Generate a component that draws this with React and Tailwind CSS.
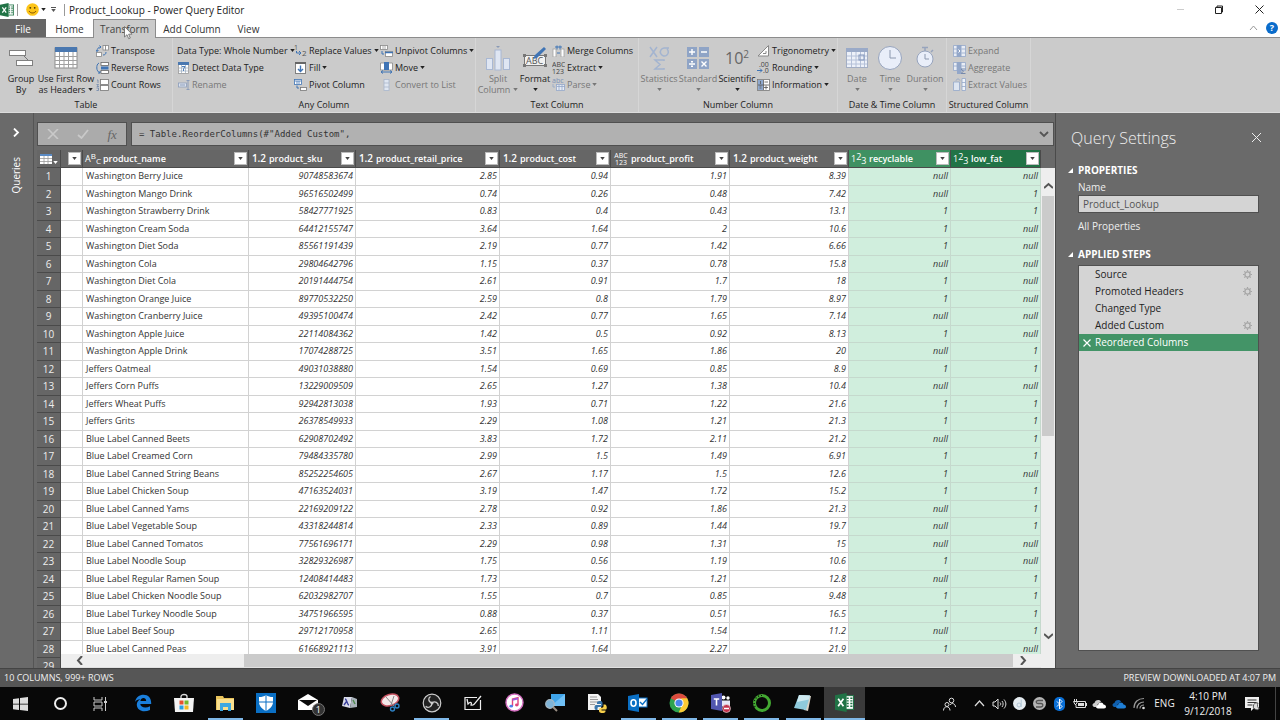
import React, { useState } from 'react'

const COLUMNS = [
  { key: 'name', label: 'product_name', type: 'text', width: 'w-[166px]' },
  { key: 'sku', label: 'product_sku', type: 'decimal', width: 'w-[107px]' },
  { key: 'retail', label: 'product_retail_price', type: 'decimal', width: 'w-[144px]' },
  { key: 'cost', label: 'product_cost', type: 'decimal', width: 'w-[111px]' },
  { key: 'profit', label: 'product_profit', type: 'any', width: 'w-[119px]' },
  { key: 'weight', label: 'product_weight', type: 'decimal', width: 'w-[119px]' },
  { key: 'recyclable', label: 'recyclable', type: 'whole', width: 'w-[102px]', head: 'bg-[#3f9162]' },
  { key: 'lowFat', label: 'low_fat', type: 'whole', width: 'w-[90px]', head: 'bg-[#217346]' },
]

const ROWS = [
  ['Washington Berry Juice', '90748583674', '2.85', '0.94', '1.91', '8.39', 'null', 'null'],
  ['Washington Mango Drink', '96516502499', '0.74', '0.26', '0.48', '7.42', 'null', '1'],
  ['Washington Strawberry Drink', '58427771925', '0.83', '0.4', '0.43', '13.1', '1', '1'],
  ['Washington Cream Soda', '64412155747', '3.64', '1.64', '2', '10.6', '1', 'null'],
  ['Washington Diet Soda', '85561191439', '2.19', '0.77', '1.42', '6.66', '1', 'null'],
  ['Washington Cola', '29804642796', '1.15', '0.37', '0.78', '15.8', 'null', 'null'],
  ['Washington Diet Cola', '20191444754', '2.61', '0.91', '1.7', '18', '1', 'null'],
  ['Washington Orange Juice', '89770532250', '2.59', '0.8', '1.79', '8.97', '1', 'null'],
  ['Washington Cranberry Juice', '49395100474', '2.42', '0.77', '1.65', '7.14', 'null', 'null'],
  ['Washington Apple Juice', '22114084362', '1.42', '0.5', '0.92', '8.13', '1', 'null'],
  ['Washington Apple Drink', '17074288725', '3.51', '1.65', '1.86', '20', 'null', '1'],
  ['Jeffers Oatmeal', '49031038880', '1.54', '0.69', '0.85', '8.9', '1', '1'],
  ['Jeffers Corn Puffs', '13229009509', '2.65', '1.27', '1.38', '10.4', 'null', 'null'],
  ['Jeffers Wheat Puffs', '92942813038', '1.93', '0.71', '1.22', '21.6', '1', '1'],
  ['Jeffers Grits', '26378549933', '2.29', '1.08', '1.21', '21.3', '1', '1'],
  ['Blue Label Canned Beets', '62908702492', '3.83', '1.72', '2.11', '21.2', 'null', '1'],
  ['Blue Label Creamed Corn', '79484335780', '2.99', '1.5', '1.49', '6.91', '1', '1'],
  ['Blue Label Canned String Beans', '85252254605', '2.67', '1.17', '1.5', '12.6', '1', 'null'],
  ['Blue Label Chicken Soup', '47163524031', '3.19', '1.47', '1.72', '15.2', '1', '1'],
  ['Blue Label Canned Yams', '22169209122', '2.78', '0.92', '1.86', '21.3', 'null', '1'],
  ['Blue Label Vegetable Soup', '43318244814', '2.33', '0.89', '1.44', '19.7', 'null', '1'],
  ['Blue Label Canned Tomatos', '77561696171', '2.29', '0.98', '1.31', '15', 'null', 'null'],
  ['Blue Label Noodle Soup', '32829326987', '1.75', '0.56', '1.19', '10.6', '1', 'null'],
  ['Blue Label Regular Ramen Soup', '12408414483', '1.73', '0.52', '1.21', '12.8', 'null', '1'],
  ['Blue Label Chicken Noodle Soup', '62032982707', '1.55', '0.7', '0.85', '9.48', '1', '1'],
  ['Blue Label Turkey Noodle Soup', '34751966595', '0.88', '0.37', '0.51', '16.5', '1', '1'],
  ['Blue Label Beef Soup', '29712170958', '2.65', '1.11', '1.54', '11.2', 'null', '1'],
  ['Blue Label Canned Peas', '61668921113', '3.91', '1.64', '2.27', '21.9', '1', 'null'],
  ['', '', '', '', '', '', '', ''],
]

const STEPS = [
  { name: 'Source', gear: true },
  { name: 'Promoted Headers', gear: true },
  { name: 'Changed Type', gear: false },
  { name: 'Added Custom', gear: true },
  { name: 'Reordered Columns', gear: false },
]

/* ---------- shared bits ---------- */

function Caret({ className = '' }) {
  return (
    <svg viewBox="0 0 6 4" className={`h-[3px] w-[5px] shrink-0 fill-current ${className}`} aria-hidden="true">
      <path d="M0 0h6L3 4z" />
    </svg>
  )
}

function Svg({ w, h, children, className = '' }) {
  return (
    <svg width={w} height={h} viewBox={`0 0 ${w} ${h}`} fill="none" className={`shrink-0 ${className}`} aria-hidden="true">
      {children}
    </svg>
  )
}

/* ---------- ribbon icons ---------- */

const BLUE = '#3f74b5'
const PALE = '#93a7c9'

const icons = {
  groupBy: (
    <Svg w={26} h={22}>
      <path d="M16 9l4 4" stroke="#777" />
      <rect x="1.5" y="3.5" width="16" height="5" fill="#fff" stroke="#808080" />
      <rect x="8.5" y="13.5" width="16" height="5" fill="#fff" stroke="#808080" />
    </Svg>
  ),
  firstRow: (
    <Svg w={24} h={22}>
      <rect x="1" y="1" width="22" height="20" fill="#fff" stroke="#8d8d8d" />
      <rect x="1" y="0" width="22" height="5" fill="#4a78b0" />
      <path d="M1 9.5h22M1 13.5h22M1 17.5h22M5.500 5v16M10 5v16M14.500 5v16M19 5v16" stroke="#a0a0a0" />
    </Svg>
  ),
  transpose: (
    <Svg w={13} h={12}>
      <path d="M1 6.500c0-3 1.500-4.500 4-4.500M3.500.5L5 2 3.500 3.500M0 5l1 1.500L2.500 5M7 10c2 0 3-1 3-3" stroke={BLUE} />
      <rect x="7" y=".5" width="2.500" height="4.500" fill="#fff" stroke="#888" strokeWidth=".8" />
      <rect x="9.500" y=".5" width="3" height="4.500" fill="#fff" stroke="#888" strokeWidth=".8" />
      <rect x=".5" y="7.500" width="5" height="4" fill="#fff" stroke="#888" strokeWidth=".8" />
    </Svg>
  ),
  reverse: (
    <Svg w={13} h={12}>
      <path d="M3 1C1 2 .8 4 .8 6S2 10 4 11M2 11h2V9" stroke={BLUE} />
      <rect x="5" y=".5" width="7.500" height="3" fill="#fff" stroke="#666" strokeWidth=".8" />
      <rect x="5" y="4.500" width="7.500" height="3" fill={BLUE} />
      <rect x="5" y="8.500" width="7.500" height="3" fill="#fff" stroke="#666" strokeWidth=".8" />
    </Svg>
  ),
  count: (
    <Svg w={13} h={12}>
      <path d="M1 1h1v3M.5 5.500h2L1 7.500h2M.5 9h2v2.500h-2" stroke="#6d86ab" strokeWidth=".8" />
      <rect x="4.500" y=".5" width="8" height="5" fill="#fff" stroke="#777" strokeWidth=".8" />
      <rect x="4.500" y="6.500" width="8" height="5" fill="#fff" stroke="#777" strokeWidth=".8" />
    </Svg>
  ),
  detect: (
    <Svg w={11} h={12}>
      <rect x=".5" y=".5" width="10" height="11" fill="#fff" stroke="#9a9a9a" strokeWidth=".8" />
      <rect x="0" y="0" width="11" height="3" fill="#4a78b0" />
      <path d="M1 6h9M1 9h9M3.500 3v8M7.500 3v8" stroke="#9ab" strokeWidth=".7" />
      <path d="M4 4.500h3L5.500 7v2" stroke={BLUE} strokeWidth=".9" />
    </Svg>
  ),
  rename: (
    <Svg w={12} h={10}>
      <rect x=".5" y="3" width="8" height="4" fill="#dbe2ee" stroke="#8c9dba" strokeWidth=".8" />
      <path d="M2 5h5M10 .5v9M8.500.5h3M8.500 9.500h3" stroke="#8c9dba" />
    </Svg>
  ),
  replace: (
    <svg width="13" height="13" viewBox="0 0 13 13" className="shrink-0" aria-hidden="true">
      <text x="0" y="6" fontSize="7" fill="#555" fontFamily="Open Sans, sans-serif">1</text>
      <text x="8" y="12" fontSize="8" fill="#555" fontFamily="Open Sans, sans-serif">2</text>
      <path d="M2.500 7v2h4M5 7l2 2-2 2" fill="none" stroke={BLUE} />
    </svg>
  ),
  fill: (
    <Svg w={11} h={12}>
      <rect x=".5" y=".5" width="10" height="11" fill="#fff" stroke="#808080" />
      <rect x="0" y="0" width="11" height="2" fill="#666" />
      <path d="M5.500 3.500v6M3 7l2.500 2.500L8 7" stroke={BLUE} strokeWidth="1.400" />
    </Svg>
  ),
  pivot: (
    <Svg w={13} h={12}>
      <rect x=".5" y=".5" width="7" height="5" fill="#fff" stroke={BLUE} strokeWidth=".8" />
      <path d="M1 2h6M3 2v3M5 2v3" stroke={BLUE} strokeWidth=".8" />
      <path d="M3 6.500V9h2" stroke={BLUE} />
      <rect x="6.500" y="8.500" width="6" height="3" fill="#fff" stroke="#777" strokeWidth=".8" />
    </Svg>
  ),
  unpivot: (
    <Svg w={13} h={12}>
      <rect x=".5" y=".5" width="7" height="4" fill="#fff" stroke="#888" strokeWidth=".8" />
      <path d="M3 1v4M5 1v4" stroke="#999" strokeWidth=".8" />
      <path d="M2 6v3h2" stroke={BLUE} />
      <rect x="5.500" y="6.500" width="7" height="5" fill="#fff" stroke="#888" strokeWidth=".8" />
      <path d="M5 7.500h8" stroke={BLUE} strokeWidth="1.500" />
    </Svg>
  ),
  move: (
    <Svg w={13} h={12}>
      <path d="M.5 1h12v7H.5z" fill="#fff" stroke="#888" strokeWidth=".8" />
      <rect x="4" y="0" width="5" height="8" fill={BLUE} />
      <path d="M1 10h11M3 8.500L1 10l2 1.500M10 8.500L12 10l-2 1.500" stroke={BLUE} />
    </Svg>
  ),
  list: (
    <Svg w={13} h={12}>
      <rect x="4" y=".5" width="5" height="11" fill="#dfe6f1" stroke="#a9b6cc" strokeWidth=".8" />
      <path d="M4 4h5M4 8h5" stroke="#a9b6cc" strokeWidth=".8" />
    </Svg>
  ),
  split: (
    <Svg w={26} h={26}>
      <path d="M11 1h4l-2 2z" fill="#8a9ab5" />
      <rect x="10" y="5" width="6" height="20" fill="#dfe6f3" stroke="#a9b8d3" />
      <rect x="1.500" y="13.500" width="6" height="11" fill="#dfe6f3" stroke="#a9b8d3" />
      <rect x="18.500" y="13.500" width="6" height="11" fill="#dfe6f3" stroke="#a9b8d3" />
    </Svg>
  ),
  format: (
    <svg width="26" height="24" viewBox="0 0 26 24" className="shrink-0" aria-hidden="true">
      <rect x="2.500" y="9.500" width="21" height="10" fill="#f1f1f1" stroke="#777" />
      <path d="M1 8h3v3H1zM22 8h3v3h-3zM1 18h3v3H1zM22 18h3v3h-3z" fill="#777" />
      <text x="4" y="18" fontSize="9" fill="#555" fontFamily="Open Sans, sans-serif">ABC</text>
      <path d="M22 1l2 2-9 9-4 1 2-4z" fill={BLUE} />
    </svg>
  ),
  merge: (
    <Svg w={13} h={12}>
      <rect x="1" y="4" width="3" height="8" fill="#fff" stroke="#a0a0a0" strokeWidth=".8" />
      <rect x="9" y="4" width="3" height="8" fill="#fff" stroke="#a0a0a0" strokeWidth=".8" />
      <path d="M3 2h7M5 .5v4M8 .5v4M5 8h3" stroke={BLUE} />
    </Svg>
  ),
  extract: (
    <svg width="13" height="14" viewBox="0 0 13 14" className="shrink-0" aria-hidden="true">
      <text x="0" y="6" fontSize="7" fill="#444" fontFamily="Open Sans, sans-serif">ABC</text>
      <text x="0" y="13" fontSize="7" fill="#444" fontFamily="Open Sans, sans-serif">123</text>
    </svg>
  ),
  parse: (
    <svg width="13" height="13" viewBox="0 0 13 13" className="shrink-0" aria-hidden="true">
      <text x="0" y="5" fontSize="7" fill="#7d93b8" fontFamily="Open Sans, sans-serif">abc</text>
      <rect x="4.500" y="6.500" width="8" height="6" fill="#e6ebf4" stroke={PALE} strokeWidth=".8" />
      <path d="M1 6v3h2M5 8.500h8M7 7v5M10 7v5" fill="none" stroke={PALE} strokeWidth=".8" />
    </svg>
  ),
  statistics: (
    <Svg w={24} h={26}>
      <path d="M3 2l7 10M10 2L3 12M22 3h-5a4 4 0 1 0 3 1" stroke="#a3b4d0" strokeWidth="1.500" />
      <path d="M17 16V15H8l5 4.500L8 24h9v-1" stroke="#a3b4d0" strokeWidth="1.500" />
    </Svg>
  ),
  standard: (
    <Svg w={24} h={24}>
      <path d="M1 1h10v10H1zM13 1h10v10H13zM1 13h10v10H1zM13 13h10v10H13z" fill="#8fa4c6" />
      <path d="M6 3v6M3 6h6M15 6h6M3 18h6M15.500 15.500l5 5M20.500 15.500l-5 5" stroke="#fff" strokeWidth="1.400" />
      <path d="M5 15h2v1.500H5zM5 19.500h2V21H5z" fill="#fff" />
    </Svg>
  ),
  trig: (
    <Svg w={13} h={12}>
      <path d="M1 11L11.500.5V11z" fill="#fff" stroke="#888" />
      <path d="M9 6v2.500H6" stroke="#888" />
    </Svg>
  ),
  rounding: (
    <svg width="13" height="13" viewBox="0 0 13 13" className="shrink-0" aria-hidden="true">
      <text x="2" y="6" fontSize="7" fill="#444" fontFamily="Open Sans, sans-serif">.00</text>
      <text x="6" y="12" fontSize="7" fill="#444" fontFamily="Open Sans, sans-serif">.0</text>
      <path d="M0 9.500h5M3 7.500l2 2-2 2" fill="none" stroke={BLUE} />
    </svg>
  ),
  information: (
    <Svg w={13} h={12}>
      <rect x=".5" y=".5" width="12" height="11" fill="#fff" stroke="#777" strokeWidth=".8" />
      <rect x="1" y="1" width="5" height="10" fill="#8fa9cf" />
      <path d="M3.500 2v3M2.500 7h2M2.500 9h2M7.500 3h3.500M9 6.500v4M7 8.500h4M6.500 1v10M1 6h11" stroke="#555" strokeWidth=".8" />
    </Svg>
  ),
  date: (
    <Svg w={24} h={22}>
      <rect x="1.500" y="1.500" width="21" height="19" fill="#edf1f9" stroke="#a3aec4" />
      <rect x="1" y="1" width="22" height="4" fill="#9aaac8" />
      <path d="M2 9h20M2 13h20M2 17h20M6.500 5v15M11 5v15M15.500 5v15M19.500 5v15" stroke="#b4c0d8" />
      <rect x="14" y="8" width="5" height="5" stroke="#8296bb" />
    </Svg>
  ),
  time: (
    <Svg w={26} h={26}>
      <circle cx="13" cy="13" r="11.500" fill="#e9eef9" stroke="#97a4bd" />
      <path d="M13 5v8h6" stroke="#8c98ae" />
    </Svg>
  ),
  duration: (
    <Svg w={24} h={24}>
      <path d="M9 1.500h6M12 1.500V5M18 6l2-2" stroke="#97a4bd" strokeWidth="1.500" />
      <circle cx="12" cy="13" r="8" fill="#e9eef9" stroke="#97a4bd" />
      <path d="M12 8v5h4" stroke="#8c98ae" />
    </Svg>
  ),
  expand: (
    <Svg w={13} h={12}>
      <path d="M.5.5h12v11H.5zM4 .5v11M.5 4H4M.5 8H4M8.500 4h4M8.500 8h4" fill="#e9edf5" stroke={PALE} strokeWidth=".8" />
      <path d="M4 0h4.500v12H4z" fill={PALE} />
      <path d="M5.500 4.500L7 6 5.500 7.500" stroke="#fff" />
    </Svg>
  ),
  aggregate: (
    <Svg w={13} h={12}>
      <path d="M.5.5h12v8H.5zM4 .5v8M.5 4H4M8.500 4h4" fill="#e9edf5" stroke={PALE} strokeWidth=".8" />
      <path d="M4 0h4.500v12H4z" fill={PALE} />
      <path d="M12.500 7H8l2.500 2.200L8 11.500h4.500" stroke="#7588aa" />
    </Svg>
  ),
  extractValues: (
    <Svg w={13} h={13}>
      <path d="M.5 4h6v8.500h-6z" fill="#dde5f1" stroke={PALE} strokeWidth=".8" />
      <path d="M9 .5h3.500v12H9zM9 4.500h3.500M9 8.500h3.500" fill="#eef2f9" stroke={PALE} strokeWidth=".8" />
      <path d="M3 2.500C4 .5 6 .5 7 2.500" stroke={PALE} />
    </Svg>
  ),
}

/* ---------- ribbon ---------- */

function SmallButton({ icon, label, caret, disabled }) {
  return (
    <button
      disabled={disabled}
      className={`flex h-[17px] items-center gap-[2px] whitespace-nowrap text-[9px] leading-[17px] ${disabled ? 'text-[#777]' : 'text-[#222]'}`}
    >
      {icon && <span className="flex w-[13px] shrink-0 justify-center">{icon}</span>}
      <span>{label}</span>
      {caret && <Caret />}
    </button>
  )
}

function LargeButton({ icon, lines, caret = 'below', disabled, width }) {
  return (
    <button
      disabled={disabled}
      className={`flex shrink-0 flex-col items-center whitespace-nowrap text-[9px] leading-[11px] ${width} ${disabled ? 'text-[#777]' : 'text-[#222]'}`}
    >
      <span className="flex h-[31px] items-center justify-center">{icon}</span>
      <span>{lines[0]}</span>
      <span className="flex h-[11px] items-center gap-[3px]">
        {lines[1]}
        {caret !== 'none' && <Caret />}
      </span>
    </button>
  )
}

function RibbonGroup({ title, width, children }) {
  return (
    <section className={`flex shrink-0 flex-col border-r border-[#d6d6d6] ${width}`} aria-label={title}>
      <div className="flex h-[60px] pt-1">{children}</div>
      <div className="h-[14px] text-center text-[9px] leading-[14px] whitespace-nowrap text-[#222]">{title}</div>
    </section>
  )
}

function Stack({ width = '', children }) {
  return <div className={`flex shrink-0 flex-col items-start ${width}`}>{children}</div>
}

function Ribbon() {
  return (
    <div className="flex h-[75px] shrink-0 overflow-hidden border-b border-[#dcdcdc] bg-[#cbcbcb]">
      <RibbonGroup title="Table" width="w-[173px]">
        <LargeButton icon={icons.groupBy} lines={['Group', 'By']} caret="none" width="ml-1 w-[34px]" />
        <LargeButton icon={icons.firstRow} lines={['Use First Row', 'as Headers']} width="w-14 mr-[2px]" />
        <Stack>
          <SmallButton icon={icons.transpose} label="Transpose" />
          <SmallButton icon={icons.reverse} label="Reverse Rows" />
          <SmallButton icon={icons.count} label="Count Rows" />
        </Stack>
      </RibbonGroup>
      <RibbonGroup title="Any Column" width="w-[303px]">
        <Stack width="ml-1 w-[117px]">
          <SmallButton label="Data Type: Whole Number" caret />
          <SmallButton icon={icons.detect} label="Detect Data Type" />
          <SmallButton icon={icons.rename} label="Rename" disabled />
        </Stack>
        <Stack width="w-[86px]">
          <SmallButton icon={icons.replace} label="Replace Values" caret />
          <SmallButton icon={icons.fill} label="Fill" caret />
          <SmallButton icon={icons.pivot} label="Pivot Column" />
        </Stack>
        <Stack>
          <SmallButton icon={icons.unpivot} label="Unpivot Columns" caret />
          <SmallButton icon={icons.move} label="Move" caret />
          <SmallButton icon={icons.list} label="Convert to List" disabled />
        </Stack>
      </RibbonGroup>
      <RibbonGroup title="Text Column" width="w-[163px]">
        <LargeButton icon={icons.split} lines={['Split', 'Column']} disabled width="ml-[2px] w-10" />
        <LargeButton icon={icons.format} lines={['Format', '']} width="w-[34px]" />
        <Stack>
          <SmallButton icon={icons.merge} label="Merge Columns" />
          <SmallButton icon={icons.extract} label="Extract" caret />
          <SmallButton icon={icons.parse} label="Parse" caret disabled />
        </Stack>
      </RibbonGroup>
      <RibbonGroup title="Number Column" width="w-[199px]">
        <LargeButton icon={icons.statistics} lines={['Statistics', '']} disabled width="w-10" />
        <LargeButton icon={icons.standard} lines={['Standard', '']} disabled width="w-[38px]" />
        <LargeButton
          icon={
            <span className="flex items-start text-[16px] leading-5 text-[#666]">
              10<span className="text-[10px] leading-3">2</span>
            </span>
          }
          lines={['Scientific', '']}
          width="w-10"
        />
        <Stack>
          <SmallButton icon={icons.trig} label="Trigonometry" caret />
          <SmallButton icon={icons.rounding} label="Rounding" caret />
          <SmallButton icon={icons.information} label="Information" caret />
        </Stack>
      </RibbonGroup>
      <RibbonGroup title="Date & Time Column" width="w-[109px]">
        <LargeButton icon={icons.date} lines={['Date', '']} disabled width="ml-[2px] w-[34px]" />
        <LargeButton icon={icons.time} lines={['Time', '']} disabled width="w-8" />
        <LargeButton icon={icons.duration} lines={['Duration', '']} disabled width="w-[38px]" />
      </RibbonGroup>
      <RibbonGroup title="Structured Column" width="w-[84px]">
        <Stack width="ml-[6px]">
          <SmallButton icon={icons.expand} label="Expand" disabled />
          <SmallButton icon={icons.aggregate} label="Aggregate" disabled />
          <SmallButton icon={icons.extractValues} label="Extract Values" disabled />
        </Stack>
      </RibbonGroup>
    </div>
  )
}

function ExcelLogo({ size = 16 }) {
  return (
    <svg width={size} height={size} viewBox="0 0 18 18" aria-hidden="true" className="shrink-0">
      <rect x="9" y="2.500" width="8.500" height="13" fill="#fff" stroke="#217346" />
      <path d="M11 5h2M11 7.500h2M11 10h2M11 12.500h2M14.500 5h2M14.500 7.500h2M14.500 10h2M14.500 12.500h2" stroke="#217346" strokeWidth="1.300" />
      <path d="M0 2.200L11 0v18L0 15.800z" fill="#217346" />
      <path d="M3 5.500l5 7M8 5.500l-5 7" stroke="#fff" strokeWidth="1.600" />
    </svg>
  )
}

function TitleBar() {
  return (
    <header className="flex h-[19px] shrink-0 items-center bg-white">
      <ExcelLogo size={14} />
      <span className="ml-[3px] h-3 w-px bg-[#999]" />
      <button className="ml-2 flex items-center gap-[2px] text-[#222]" aria-label="Send a smile">
        <svg width="13" height="13" viewBox="0 0 13 13" aria-hidden="true">
          <circle cx="6.500" cy="6.500" r="6.300" fill="#fcc419" />
          <circle cx="4.300" cy="4.800" r=".9" fill="#4a3500" />
          <circle cx="8.700" cy="4.800" r=".9" fill="#4a3500" />
          <path d="M3 8c1.500 2.600 5.500 2.600 7 0" fill="none" stroke="#7a4b00" />
        </svg>
        <Caret />
      </button>
      <button className="ml-[5px] flex flex-col items-center gap-px text-[#555]" aria-label="Customize quick access toolbar">
        <span className="h-px w-[5px] bg-current" />
        <Caret />
      </button>
      <span className="ml-2 h-3 w-px bg-[#999]" />
      <h1 className="ml-1 text-[10px] leading-none whitespace-nowrap text-[#222]">Product_Lookup - Power Query Editor</h1>
      <div className="ml-auto flex items-center">
        <button aria-label="Minimize" className="flex w-10 justify-center">
          <span className="h-px w-[7px] bg-[#ccc]" />
        </button>
        <button aria-label="Restore" className="flex w-[38px] justify-center">
          <Svg w={10} h={10}>
            <path d="M1.500 2.500h6v6h-6zM3 2.500V1h5.500v6H7.500" stroke="#222" />
          </Svg>
        </button>
        <button aria-label="Close" className="flex w-[42px] justify-center">
          <Svg w={9} h={9}>
            <path d="M.5.5l8 8M8.500.5l-8 8" stroke="#222" />
          </Svg>
        </button>
      </div>
    </header>
  )
}

function Tabs() {
  const [active, setActive] = useState('Transform')
  const tabs = [
    { name: 'Home', width: 'w-[47px]' },
    { name: 'Transform', width: 'w-[63px]' },
    { name: 'Add Column', width: 'w-[72px]' },
    { name: 'View', width: 'w-[41px]' },
  ]
  return (
    <nav className="relative flex h-[19px] shrink-0 border-b border-[#8c8c8c] bg-white text-[10px]">
      <button className="w-[46px] bg-[#666] pt-[2px] text-white">File</button>
      {tabs.map((tab) => (
        <button
          key={tab.name}
          onClick={() => setActive(tab.name)}
          className={`whitespace-nowrap ${tab.width} ${
            active === tab.name
              ? '-mb-px border border-b-0 border-[#8c8c8c] bg-[#cbcbcb] text-[#444]'
              : 'pt-[2px] text-[#333]'
          }`}
        >
          {tab.name}
        </button>
      ))}
      <div className="ml-auto flex items-center gap-2 pr-[2px]">
        <button aria-label="Collapse the ribbon">
          <Svg w={9} h={6}>
            <path d="M1 5l3.500-4L8 5" stroke="#999" />
          </Svg>
        </button>
        <button aria-label="Help" className="h-3 w-3 rounded-full bg-[#0a6ccb] text-[9px] leading-3 font-bold text-white">
          ?
        </button>
      </div>
      {/* pointer resting on the Transform tab */}
      <svg width="9" height="14" viewBox="0 0 9 14" className="absolute top-[7px] left-[124px]" aria-hidden="true">
        <path d="M.5.5v10.500l2.500-2.300 1.700 4 1.600-.7-1.700-3.800H8z" fill="#fff" stroke="#666" strokeWidth=".8" />
      </svg>
    </nav>
  )
}

/* ---------- editor ---------- */

function FormulaBar() {
  return (
    <div className="mr-px flex h-6 shrink-0 gap-[4px]">
      <div className="flex w-[90px] shrink-0 items-center justify-around border border-[#505050] bg-[#ababab]">
        <button aria-label="Cancel">
          <Svg w={12} h={10}>
            <path d="M1 0l10 10M11 0L1 10" stroke="#c9c9c9" strokeWidth="1.600" />
          </Svg>
        </button>
        <button aria-label="Accept">
          <Svg w={12} h={10}>
            <path d="M1 6l3.500 3L11 1" stroke="#c9c9c9" strokeWidth="1.800" />
          </Svg>
        </button>
        <button aria-label="Insert function" className="font-['Liberation_Serif',serif] text-[13px] leading-none text-[#666] italic">
          fx
        </button>
      </div>
      <div className="flex min-w-0 flex-1 items-center border border-[#505050] bg-[#b1b1b1] pr-1 pl-[7px]">
        <input
          aria-label="Formula"
          defaultValue={'= Table.ReorderColumns(#"Added Custom",'}
          className="h-full min-w-0 flex-1 bg-transparent font-['DejaVu_Sans_Mono',monospace] text-[9px] text-[#333] outline-none"
        />
        <button aria-label="Expand formula bar">
          <Svg w={10} h={7}>
            <path d="M1 1l4 4 4-4" stroke="#555" strokeWidth="1.800" />
          </Svg>
        </button>
      </div>
    </div>
  )
}

function TypeIcon({ type }) {
  if (type === 'text') {
    return (
      <span className="flex h-[13px] w-4 shrink-0 text-[9px] leading-[9px] font-normal">
        <span className="self-center">A</span>
        <span className="self-start text-[8px] leading-[8px]">B</span>
        <span className="self-end text-[8px] leading-[8px]">C</span>
      </span>
    )
  }
  if (type === 'whole') {
    return (
      <span className="flex h-[13px] w-4 shrink-0 text-[9px] leading-[9px] font-normal">
        <span className="self-center">1</span>
        <span className="self-start">2</span>
        <span className="self-end">3</span>
      </span>
    )
  }
  if (type === 'any') {
    return (
      <span className="flex w-4 shrink-0 flex-col text-[7px] leading-[7px] font-normal">
        <span>ABC</span>
        <span>123</span>
      </span>
    )
  }
  return <span className="w-4 shrink-0 text-[10px] font-semibold">1.2</span>
}

function FilterButton({ label }) {
  return (
    <button aria-label={label} className="flex h-[13px] w-[13px] shrink-0 items-center justify-center border border-[#bbb] bg-white text-[#444]">
      <Caret />
    </button>
  )
}

function DataGrid() {
  return (
    <div className="flex min-h-0 flex-1">
      <div className="relative min-w-0 flex-1 overflow-hidden">
        <table className="w-full table-fixed border-separate border-spacing-0 text-[9px]">
          <colgroup>
            <col className="w-6" />
            <col className="w-[22px]" />
            {COLUMNS.map((col) => (
              <col key={col.key} className={col.width} />
            ))}
          </colgroup>
          <thead>
            <tr className="h-[18px] bg-[#666] text-white">
              <th className="border-r border-b border-[#4a4a4a] p-0">
                <button aria-label="Table options" className="flex w-full items-end justify-center gap-px">
                  <Svg w={12} h={10}>
                    <rect x="0" y="0" width="12" height="10" fill="#fff" />
                    <rect x="0" y="0" width="12" height="2" fill="#5b8bc4" />
                    <path d="M0 4.500h12M0 7.500h12M4 2v8M8 2v8" stroke="#999" strokeWidth=".8" />
                  </Svg>
                  <Caret />
                </button>
              </th>
              <th className="border-r border-b border-[#4a4a4a] p-0">
                <div className="flex justify-end pr-px">
                  <FilterButton label="Filter previous column" />
                </div>
              </th>
              {COLUMNS.map((col) => (
                <th key={col.key} scope="col" className={`border-r border-b border-[#4a4a4a] p-0 ${col.head || ''}`}>
                  <div className="flex items-center pr-px pl-[2px]">
                    <TypeIcon type={col.type} />
                    <span className="ml-[2px] flex-1 truncate text-left text-[9px] font-semibold">{col.label}</span>
                    <FilterButton label={`Filter ${col.label}`} />
                  </div>
                </th>
              ))}
            </tr>
          </thead>
          <tbody>
            {ROWS.map((row, i) => (
              <tr key={i} className="h-[18px] bg-white text-[#333] even:h-[17px]">
                <th scope="row" className="border-r border-b border-[#4a4a4a] bg-[#666] p-0 text-center text-[10px] leading-[15px] font-normal text-[#eee]">
                  {i + 1}
                </th>
                <td className="border-r border-b border-[#d2d2d2] p-0" />
                {row.map((value, j) => (
                  <td
                    key={COLUMNS[j].key}
                    className={`truncate border-r border-b py-0 align-top leading-[15px] ${
                      j === 0 ? 'pr-1 pl-[3px] text-left' : 'pr-[2px] pl-1 text-right italic'
                    } ${j > 5 ? 'border-[#c5d9cd] bg-[#d0eedd]' : 'border-[#d2d2d2]'}`}
                  >
                    {value}
                  </td>
                ))}
              </tr>
            ))}
          </tbody>
        </table>

        {/* horizontal scroll bar lies over the last row */}
        <div className="absolute right-0 bottom-0 left-6 flex h-[14px] items-center border-b border-[#e0e0e0] bg-[#eee]">
          <button aria-label="Scroll left" className="flex w-9 shrink-0 justify-center">
            <Svg w={7} h={9}>
              <path d="M6 0L2 4.500 6 9" stroke="#555" strokeWidth="2" />
            </Svg>
          </button>
          <div className="flex h-full flex-1">
            <div className="w-[16%]" />
            <div className="flex-1 bg-[#cbcbcb]" />
          </div>
          <button aria-label="Scroll right" className="flex w-7 shrink-0 pl-[7px]">
            <Svg w={7} h={9}>
              <path d="M1 0l4 4.500L1 9" stroke="#555" strokeWidth="2" />
            </Svg>
          </button>
        </div>
      </div>

      <div className="mt-[18px] flex w-[14px] shrink-0 flex-col items-center bg-[#eee] pt-[14px] pb-7">
        <button aria-label="Scroll up" className="flex h-[14px] items-start">
          <Svg w={9} h={7}>
            <path d="M0 6l4.500-4L9 6" stroke="#555" strokeWidth="2" />
          </Svg>
        </button>
        <div className="flex w-full flex-1 flex-col items-center">
          <div className="h-[55%] w-3 bg-[#cbcbcb]" />
        </div>
        <button aria-label="Scroll down">
          <Svg w={9} h={7}>
            <path d="M0 1l4.500 4L9 1" stroke="#555" strokeWidth="2" />
          </Svg>
        </button>
      </div>
    </div>
  )
}

function Gear() {
  return (
    <Svg w={9} h={9}>
      <circle cx="4.500" cy="4.500" r="2.600" stroke="#a5a5a5" strokeWidth="1.300" />
      <path d="M4.500 0v1.500M4.500 7.500V9M0 4.500h1.500M7.500 4.500H9M1.300 1.300l1 1M6.700 6.700l1 1M1.300 7.700l1-1M6.700 2.300l1-1" stroke="#a5a5a5" strokeWidth="1.200" />
    </Svg>
  )
}

function SectionTitle({ children }) {
  return (
    <h3 className="flex h-[17px] items-center gap-[5px] pl-3 text-[10px] font-bold text-white">
      <svg width="5" height="5" viewBox="0 0 5 5" className="fill-white" aria-hidden="true">
        <path d="M5 0v5H0z" />
      </svg>
      {children}
    </h3>
  )
}

function QuerySettings() {
  const [selected, setSelected] = useState(4)
  return (
    <aside className="flex w-[225px] shrink-0 flex-col border-l border-[#4a4a4a] bg-[#6a6a6a] pb-[17px] text-[10px] text-[#eee]">
      <div className="flex h-[49px] items-center justify-between pr-[18px] pl-[15px]">
        <h2 className="text-[16px] leading-none font-light">Query Settings</h2>
        <button aria-label="Close pane">
          <Svg w={11} h={11}>
            <path d="M1 1l9 9M10 1l-9 9" stroke="#eee" />
          </Svg>
        </button>
      </div>
      <SectionTitle>PROPERTIES</SectionTitle>
      <div className="flex flex-col items-start pr-[21px] pl-[22px]">
        <label htmlFor="query-name" className="h-4 leading-4">
          Name
        </label>
        <input
          id="query-name"
          defaultValue="Product_Lookup"
          className="h-[18px] w-full border border-[#505050] bg-[#d4d4d4] px-1 text-[10px] text-[#555] outline-none"
        />
        <a href="#all-properties" className="mt-[5px] h-4 leading-4">
          All Properties
        </a>
      </div>
      <div className="h-3" />
      <SectionTitle>APPLIED STEPS</SectionTitle>
      <ol className="mt-[2px] mr-[21px] ml-[22px] flex-1 border border-[#505050] bg-[#d4d4d4] text-[#222]">
        {STEPS.map((step, i) => (
          <li key={step.name}>
            <button
              onClick={() => setSelected(i)}
              className={`flex h-[17px] w-full items-center pr-[6px] pl-1 text-left ${selected === i ? 'bg-[#439467] text-white' : ''}`}
            >
              <span className="w-3 shrink-0">
                {selected === i && (
                  <Svg w={8} h={8}>
                    <path d="M.5.5l7 7M7.500.5l-7 7" stroke="#fff" strokeWidth="1.200" />
                  </Svg>
                )}
              </span>
              <span className="flex-1">{step.name}</span>
              {step.gear && <Gear />}
            </button>
          </li>
        ))}
      </ol>
    </aside>
  )
}

/* ---------- taskbar ---------- */

const apps = [
  {
    name: 'Edge',
    icon: (
      <Svg w={18} h={18}>
        <path d="M1 8C2 3 5.500.8 9.500.8c5 0 8 3.700 7.700 9.200H6.300c.2 3.400 5.400 4.600 9.700 2.200v3.700C10 19 3 17 2.800 10.800 2.700 8 4.500 6 6.500 5 4 5.400 2 6.300 1 8zm5.400-1h5.800c0-4-5.300-4-5.800 0z" fill="#1a7fdc" />
      </Svg>
    ),
  },
  {
    name: 'Store',
    icon: (
      <Svg w={20} h={20}>
        <path d="M7 6V3.500C7 .8 13 .8 13 3.500V6" stroke="#ddd" strokeWidth="1.300" />
        <path d="M0 5h20l-1 14H1z" fill="#f3f3f3" />
        <path d="M5.500 7.500h4v4h-4z" fill="#e8502d" />
        <path d="M10.500 7.500h4v4h-4z" fill="#76b82a" />
        <path d="M5.500 12.500h4v4h-4z" fill="#2b9fe0" />
        <path d="M10.500 12.500h4v4h-4z" fill="#f5b820" />
      </Svg>
    ),
  },
  {
    name: 'File Explorer',
    running: true,
    icon: (
      <Svg w={18} h={16}>
        <path d="M0 1h7l1 2h10v12H0z" fill="#e9c45c" />
        <path d="M1 4h17v11H1z" fill="#fbe08d" />
        <path d="M4 8h11v8h-3v-4H7v4H4z" fill="#3fa9e0" />
      </Svg>
    ),
  },
  {
    name: 'Defender',
    icon: (
      <Svg w={20} h={20}>
        <rect width="20" height="20" fill="#0a6fc4" />
        <path d="M10 2c2 1.500 4 2 7 2v5c0 4-3 7-7 9-4-2-7-5-7-9V4c3 0 5-.5 7-2z" fill="#fff" />
        <path d="M10 2v16M3 9h14" stroke="#0a6fc4" />
      </Svg>
    ),
  },
  {
    name: 'Mail',
    icon: (
      <span className="relative block h-[18px] w-5">
        <Svg w={20} h={17}>
          <path d="M0 6l10-6 10 6v10H0z" fill="#fff" />
          <path d="M1 6h18l-9 6z" fill="#0a0a0a" />
        </Svg>
        <span className="absolute -right-[7px] -bottom-1 h-[13px] w-[13px] rounded-full border border-[#777] bg-[#333] text-center text-[9px] leading-[11px] text-white">
          1
        </span>
      </span>
    ),
  },
  {
    name: 'Lambda dice',
    icon: (
      <Svg w={17} h={13}>
        <path d="M3 1h8l-2 11-8-2z" fill="#d8dbea" />
        <path d="M11 1l5 2v8l-7 1z" fill="#a9b3ba" />
        <path d="M4 3c2 0 2 6 4 6M5.500 5.500L3 9" stroke="#3b3f9a" strokeWidth="1.400" />
        <path d="M12 4l2 4" stroke="#4e8c4c" strokeWidth="1.400" />
      </Svg>
    ),
  },
  {
    name: 'Snipping Tool',
    icon: (
      <Svg w={20} h={19}>
        <ellipse cx="10" cy="7" rx="9" ry="5.500" transform="rotate(-18 10 7)" fill="#f4e9ea" stroke="#c65362" strokeWidth="1.500" />
        <path d="M6 4l8 9M14 3l-3 9" stroke="#888" />
        <circle cx="12.500" cy="16" r="2" stroke="#2e7fc1" strokeWidth="1.400" />
        <circle cx="17" cy="13" r="2" stroke="#2e7fc1" strokeWidth="1.400" />
      </Svg>
    ),
  },
  {
    name: 'OBS',
    running: true,
    icon: (
      <Svg w={20} h={20}>
        <circle cx="10" cy="10" r="8.800" fill="#222" stroke="#ccc" strokeWidth="1.200" />
        <path d="M10 10C6 9 6 5 8.500 3.500M10 10c3-2.500 6.500 0 6.300 3M10 10c0 4-4 5.500-6.300 3.300" stroke="#ccc" strokeWidth="1.300" />
        <circle cx="10" cy="10" r="1.500" fill="#ccc" />
      </Svg>
    ),
  },
  {
    name: 'Whiteboard',
    icon: (
      <Svg w={18} h={16}>
        <path d="M13 2.500H1v12h15.500V5" stroke="#eee" strokeWidth="1.200" />
        <path d="M3 4l1 5c3-3 4-1 3 1 3 1 4-2 10-9" stroke="#eee" strokeWidth="1.300" />
      </Svg>
    ),
  },
  {
    name: 'iTunes',
    icon: (
      <Svg w={19} h={19}>
        <circle cx="9.500" cy="9.500" r="8.500" fill="#fff" stroke="#d46fc0" strokeWidth="1.400" />
        <path d="M7.500 13V6l5.500-1.300v7" stroke="#e0457d" strokeWidth="1.400" />
        <path d="M7.500 6L13 4.700v1.800l-5.500 1.300z" fill="#9a5be0" />
        <ellipse cx="6.200" cy="13.200" rx="1.800" ry="1.400" fill="#4f7ff0" />
        <ellipse cx="11.800" cy="12" rx="1.800" ry="1.400" fill="#e0457d" />
      </Svg>
    ),
  },
  {
    name: 'Remote search',
    icon: (
      <Svg w={20} h={19}>
        <path d="M6 1h14v12H6z" fill="#3fa4ea" />
        <path d="M6 13L20 1v12z" fill="#6fc0f6" />
        <circle cx="5" cy="11" r="4.300" fill="#7fb4d8" stroke="#a9b9c4" strokeWidth="1.200" />
        <path d="M8 14l4 4" stroke="#9a8f84" strokeWidth="2" />
      </Svg>
    ),
  },
  {
    name: 'Python',
    icon: (
      <Svg w={20} h={20}>
        <path d="M1 1h10l3 3v13H1z" fill="#f2f2f2" />
        <path d="M3 4h7M3 6.500h8M3 9h8M3 11.500h5" stroke="#999" />
        <path d="M13 8c-3 0-3 1-3 3h4v1H9c-2 0-2 5 0 5h1.500v-2c0-2 5 0 5-3v-2c0-1.500-1-2-2.500-2z" fill="#3a76ab" />
        <path d="M15.500 20c3 0 3-1 3-2.500H14.500v-1h4c2 0 1.500-5-.5-5h-1.500v2c0 2-4.500.5-4.500 3v1.500c0 1.500 1.500 2 3.500 2z" fill="#f7cf4a" />
      </Svg>
    ),
  },
  {
    name: 'Outlook',
    running: true,
    icon: (
      <Svg w={20} h={18}>
        <rect x="10" y="4" width="9" height="9" fill="#fff" stroke="#0a6fc4" />
        <path d="M12 8l2.500 2.500L19 5" stroke="#0a6fc4" strokeWidth="1.400" />
        <path d="M0 2l11-2v18L0 16z" fill="#0a6fc4" />
        <ellipse cx="5.500" cy="9" rx="2.500" ry="3.200" stroke="#fff" strokeWidth="1.600" />
      </Svg>
    ),
  },
  {
    name: 'Chrome',
    running: true,
    icon: (
      <Svg w={20} h={20}>
        <circle cx="10" cy="10" r="9.500" fill="#2ea350" />
        <path d="M10 10L1.800 5.200A9.500 9.500 0 0 1 18.200 5.200L18 6z" fill="#dd4b3e" />
        <path d="M18.200 5.300A9.500 9.500 0 0 1 9.700 19.500L14 10l-2-4.700z" fill="#fbc934" />
        <circle cx="10" cy="10" r="4.600" fill="#fff" />
        <circle cx="10" cy="10" r="3.600" fill="#4a86ec" />
      </Svg>
    ),
  },
  {
    name: 'Teams',
    running: true,
    icon: (
      <Svg w={20} h={20}>
        <circle cx="12.500" cy="4.500" r="2" fill="#fff" />
        <circle cx="17" cy="5" r="1.700" fill="#fff" />
        <path d="M10 7.500h9v6h-9z" fill="#e6e6f5" />
        <path d="M0 2l11-2v18L0 16z" fill="#5257b0" />
        <path d="M2.800 6h5.400M5.500 6v6.500" stroke="#fff" strokeWidth="1.600" />
        <circle cx="15.500" cy="15.500" r="4" fill="#c4314b" stroke="#eee" strokeWidth=".6" />
        <path d="M13 15.500h5" stroke="#fff" strokeWidth="1.500" />
      </Svg>
    ),
  },
  {
    name: 'Anaconda',
    running: true,
    icon: (
      <Svg w={20} h={20}>
        <circle cx="10" cy="10" r="7.500" stroke="#43a832" strokeWidth="3" />
        <path d="M10 2.500A7.500 7.500 0 0 0 4 15" stroke="#0a0a0a" strokeWidth="1.200" strokeDasharray="1 2" />
      </Svg>
    ),
  },
  {
    name: 'Notepad',
    running: true,
    icon: (
      <Svg w={18} h={18}>
        <path d="M5 1l12 1-3 15-4-1z" fill="#d9d3c6" />
        <path d="M5 1l11 .5L12 16 0 14z" fill="#8fcbdc" />
        <path d="M5 1l11 .5-1 4L3 8z" fill="#cfeaf0" />
      </Svg>
    ),
  },
  { name: 'Excel', running: true, active: true, icon: <ExcelLogo size={19} /> },
]

const trayIcons = [
  {
    name: 'Hidden icons',
    icon: (
      <Svg w={11} h={7}>
        <path d="M1 6l4.500-5L10 6" stroke="#ddd" strokeWidth="1.200" />
      </Svg>
    ),
  },
  {
    name: 'Volume',
    icon: (
      <Svg w={15} h={12}>
        <path d="M1 4h2l3-3v10L3 8H1zM8 4.500c1 1 1 2 0 3M10 3c1.500 2 1.500 4 0 6M12 1.500c2.500 3 2.500 6 0 9" stroke="#ddd" />
      </Svg>
    ),
  },
  {
    name: 'Dictation',
    icon: (
      <Svg w={13} h={13}>
        <circle cx="6.500" cy="6.500" r="6.500" fill="#e6edf2" />
        <circle cx="6" cy="8" r="2" stroke="#b3c7d6" />
        <path d="M8.200 2.500v7.500" stroke="#b3c7d6" />
      </Svg>
    ),
  },
  {
    name: 'Sync',
    icon: (
      <Svg w={13} h={13}>
        <circle cx="6.500" cy="6.500" r="6.500" fill="#b5b5b5" />
        <path d="M10 3.500H5.500C2 3.500 3 6.500 5 6.500h3c2.500 0 2.500 3.500-.5 3.500H3" stroke="#555" strokeWidth="1.300" />
      </Svg>
    ),
  },
  {
    name: 'Bluetooth',
    icon: (
      <Svg w={11} h={14}>
        <rect width="11" height="14" rx="5" fill="#0a6fd6" />
        <path d="M3 4.500l5 5L5.500 12V2L8 4.500l-5 5" stroke="#fff" />
      </Svg>
    ),
  },
  {
    name: 'Battery',
    icon: (
      <Svg w={15} h={10}>
        <rect x="6" y="4" width="6" height="3" fill="#ddd" />
        <path d="M5 2.500h8.500v6H4V6M14.500 4v3M2.500 0v2M4.500 0v2M1.500 2.500h4L4 5.500H3z" stroke="#ddd" />
      </Svg>
    ),
  },
  {
    name: 'OneDrive personal',
    icon: (
      <Svg w={15} h={10}>
        <path d="M2 8C0 7 0 4.500 2.500 4 3 1 7 0 9 2.500L6 5 4 8z" fill="#ccc" />
        <path d="M6 9.500c-2.500 0-2.500-3.500 0-3.500C7 2.500 11 3 11.500 5.500c3 0 3.500 4 .5 4z" fill="#fff" />
      </Svg>
    ),
  },
  {
    name: 'OneDrive business',
    icon: (
      <Svg w={15} h={10}>
        <path d="M2 8C0 7 0 4.500 2.500 4 3 1 7 0 9 2.500L6 5 4 8z" fill="#0f5fae" />
        <path d="M6 9.500c-2.500 0-2.500-3.500 0-3.500C7 2.500 11 3 11.500 5.500c3 0 3.500 4 .5 4z" fill="#1f7fd6" />
      </Svg>
    ),
  },
  {
    name: 'Network',
    icon: (
      <Svg w={13} h={13}>
        <path d="M1 11C1 5 5 1.500 11 1.500M4 11.500C4 7.500 7 5 11 5M7 11.500C7 9.500 9 8 11 8" stroke="#999" strokeWidth="1.200" />
        <circle cx="10.500" cy="11" r="1.300" fill="#ddd" />
      </Svg>
    ),
  },
]

function Taskbar() {
  return (
    <footer className="flex h-[33px] shrink-0 bg-[#080808] text-[10px] text-[#eee]">
      <button aria-label="Start" className="flex w-10 items-center justify-center">
        <Svg w={15} h={14}>
          <path d="M0 2l6-.8v5.500H0zM7 1l8-1v6.700H7zM0 7.500h6V13l-6-.8zM7 7.500h8V14l-8-1z" fill="#ddd" />
        </Svg>
      </button>
      <button aria-label="Cortana" className="flex w-10 items-center justify-center">
        <span className="h-[13px] w-[13px] rounded-full border-2 border-[#eee]" />
      </button>
      <button aria-label="Task view" className="flex w-10 items-center justify-center">
        <Svg w={15} h={14}>
          <path d="M1 0v3h8V0M1 14v-3h8v3M1 5h8v4H1zM12.500 0v14" stroke="#ccc" />
          <path d="M11 4h3v2h-3z" fill="#ccc" />
        </Svg>
      </button>
      <div className="ml-[2px] flex w-[743px]">
        {apps.map((app) => (
          <button
            key={app.name}
            aria-label={app.name}
            className={`flex flex-1 flex-col items-center ${app.active ? 'bg-[#3a3a3a]' : ''}`}
          >
            <span className="flex flex-1 items-center">{app.icon}</span>
            <span className={`h-[2px] ${app.running ? 'bg-[#7fb8e8]' : ''} ${app.active ? 'w-full' : 'w-[35px]'}`} />
          </button>
        ))}
      </div>
      <div className="ml-auto flex items-center">
        <button aria-label="People" className="flex w-10 justify-center">
          <Svg w={13} h={14}>
            <circle cx="8.500" cy="3.500" r="2.300" stroke="#ddd" />
            <circle cx="4" cy="7.500" r="2" stroke="#ddd" />
            <path d="M.5 13.500c0-5 6.500-5 6.500 0M7 8c2-3 5.500-1 5.500 2" stroke="#ddd" />
          </Svg>
        </button>
        {trayIcons.map((item) => (
          <button key={item.name} aria-label={item.name} className="flex w-5 justify-center">
            {item.icon}
          </button>
        ))}
        <button className="w-[31px] text-center">ENG</button>
        <button className="w-14 text-center leading-[15px]">
          4:10 PM
          <br />
          9/12/2018
        </button>
        <button aria-label="Notifications" className="mr-1 flex h-full w-10 items-center border-r border-[#444] pl-[9px]">
          <Svg w={15} h={14}>
            <path d="M0 0h14v11H9l-3 3v-3H0z" fill="#eee" />
            <path d="M2.500 3h9M2.500 5.500h9M2.500 8h5" stroke="#333" />
            <path d="M13 6a3.500 3.500 0 1 0 1.500 5.500C12.500 11.500 12 8 13 6z" fill="#ddd" stroke="#333" strokeWidth=".8" />
          </Svg>
        </button>
      </div>
    </footer>
  )
}

export default function App() {
  return (
    <div className="flex h-screen w-full flex-col overflow-hidden bg-[#6a6a6a] font-['Open_Sans','Noto_Sans',sans-serif]">
      <TitleBar />
      <Tabs />
      <Ribbon />
      <main className="flex min-h-0 flex-1">
        <div className="flex w-[34px] shrink-0 flex-col items-center border-r border-[#555] bg-[#6a6a6a] pt-[15px] text-white">
          <button aria-label="Expand queries pane">
            <Svg w={7} h={9}>
              <path d="M1 .5l4 4-4 4" stroke="#fff" strokeWidth="1.800" />
            </Svg>
          </button>
          <span className="mt-5 rotate-180 text-[10px] [writing-mode:vertical-rl]">Queries</span>
        </div>
        <div className="flex min-w-0 flex-1 flex-col bg-[#6a6a6a] pt-[9px] pl-[3px]">
          <FormulaBar />
          <div className="h-1 shrink-0" />
          <DataGrid />
        </div>
        <QuerySettings />
      </main>
      <div className="flex h-[19px] shrink-0 items-center justify-between border-t border-[#444] bg-[#565656] pr-1 pl-1 text-[9px] text-[#f0f0f0]">
        <span>10 COLUMNS, 999+ ROWS</span>
        <span>PREVIEW DOWNLOADED AT 4:07 PM</span>
      </div>
      <Taskbar />
    </div>
  )
}
